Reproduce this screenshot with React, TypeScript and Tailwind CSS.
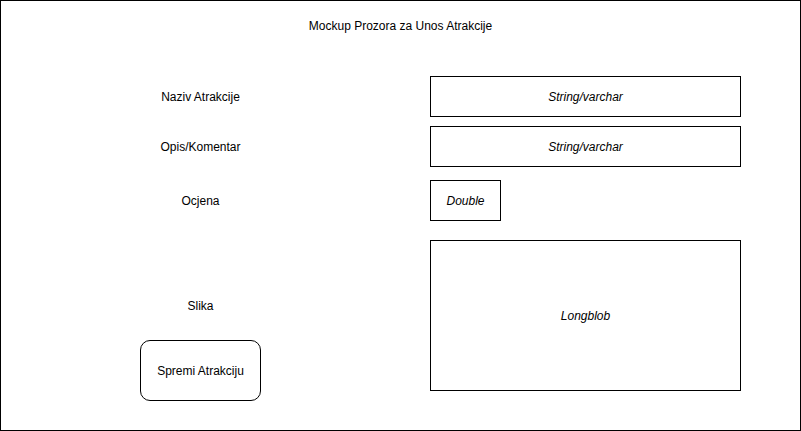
import React from 'react';

const Box: React.FC<{ w: string; h: string; label: string }> = ({ w, h, label }) => (
  <div className={`${w} ${h} border border-black flex items-center justify-center italic`}>{label}</div>
);

export default function App() {
  return (
    <div className="w-[801px] h-[431px] border border-black bg-white font-['Liberation_Sans',Arial,sans-serif] text-[12px] leading-[14px] text-black">
      <div className="pt-[18px] text-center">Mockup Prozora za Unos Atrakcije</div>

      <div className="mt-[43px] flex">
        <div className="w-[399px] flex items-center justify-center">Naziv Atrakcije</div>
        <div className="pl-[30px]">
          <Box w="w-[311px]" h="h-[41px]" label="String/varchar" />
        </div>
      </div>

      <div className="mt-[9px] flex">
        <div className="w-[399px] flex items-center justify-center">Opis/Komentar</div>
        <div className="pl-[30px]">
          <Box w="w-[311px]" h="h-[41px]" label="String/varchar" />
        </div>
      </div>

      <div className="mt-[13px] flex">
        <div className="w-[399px] flex items-center justify-center">Ocjena</div>
        <div className="pl-[30px]">
          <Box w="w-[71px]" h="h-[41px]" label="Double" />
        </div>
      </div>

      <div className="mt-[19px] flex">
        <div className="w-[399px] flex flex-col items-center pt-[59px]">
          <div>Slika</div>
          <button className="mt-[27px] w-[121px] h-[61px] rounded-[10px] border border-black flex items-center justify-center">
            Spremi Atrakciju
          </button>
        </div>
        <div className="pl-[30px]">
          <Box w="w-[311px]" h="h-[151px]" label="Longblob" />
        </div>
      </div>
    </div>
  );
}
